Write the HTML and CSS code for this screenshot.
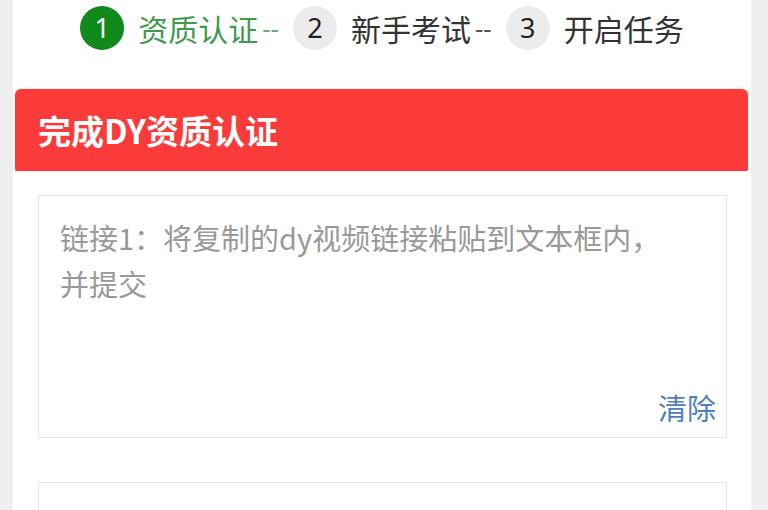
FILE: index.html
```html
<!DOCTYPE html>
<html lang="zh-CN">
<head>
<meta charset="utf-8">
<title>完成DY资质认证</title>
<link rel="stylesheet" href="styles.css">
</head>
<body>
<div class="panel">
  <div class="steps">
    <span class="step-num step-num-active">1</span>
    <span class="step-label step-label-active">资质认证</span>
    <span class="step-sep step-sep-active">--</span>
    <span class="step-num">2</span>
    <span class="step-label">新手考试</span>
    <span class="step-sep">--</span>
    <span class="step-num">3</span>
    <span class="step-label">开启任务</span>
  </div>
  <div class="card-head">完成DY资质认证</div>
  <div class="card-body">
    <div class="field">
      <div class="field-placeholder">链接1：将复制的dy视频链接粘贴到文本框内，<br>并提交</div>
      <div class="field-actions"><span class="field-clear">清除</span></div>
    </div>
    <div class="field field-second"></div>
  </div>
</div>
</body>
</html>
```

FILE: styles.css
```css
html, body {
  margin: 0;
  padding: 0;
}
body {
  background: #efefef;
  font-family: "Noto Sans CJK SC", "Noto Sans", sans-serif;
  height: 510px;
  overflow: hidden;
}
.panel {
  margin: 0 17px 0 13px;
  background: #ffffff;
  height: 510px;
  overflow: hidden;
}
.steps {
  height: 56px;
  display: flex;
  align-items: center;
  justify-content: center;
  margin-bottom: 33px;
}
.step-num {
  width: 44px;
  height: 44px;
  border-radius: 50%;
  background: #ececec;
  color: #222;
  font-family: "Noto Sans", sans-serif;
  font-size: 27px;
  line-height: 44px;
  text-align: center;
  flex: none;
  margin-right: 14px;
}
.step-num-active {
  background: #0f8a1a;
  color: #fff;
}
.step-label {
  font-size: 30px;
  line-height: 40px;
  color: #333;
  white-space: nowrap;
}
.step-label-active {
  color: #3f9a4f;
}
.step-sep {
  font-family: "Noto Sans", sans-serif;
  font-size: 26px;
  line-height: 40px;
  color: #555;
  margin: 0 14px 0 4px;
  white-space: nowrap;
  flex: none;
}
.step-sep-active {
  color: #6aa877;
}
.card-head {
  margin: 0 3px 0 2px;
  height: 82px;
  background: #fb3a3a;
  border-radius: 6px 6px 2px 2px;
  box-shadow: 0 0 2px rgba(251, 58, 58, 0.35);
  color: #fff;
  font-size: 33px;
  font-weight: 700;
  line-height: 82px;
  padding-left: 23px;
}
.card-body {
  padding: 24px 24px 0 25px;
}
.field {
  border: 1px solid #e6e6e6;
  display: flex;
  flex-direction: column;
  justify-content: space-between;
  padding: 18px 10px 12px 21px;
  box-sizing: border-box;
  height: 243px;
}
.field-placeholder {
  font-size: 29px;
  line-height: 46px;
  color: #999;
}
.field-actions {
  display: flex;
  justify-content: flex-end;
}
.field-clear {
  font-size: 29px;
  line-height: 36px;
  color: #4f7fc0;
}
.field-second {
  margin-top: 44px;
  height: 28px;
  border-bottom: none;
  padding: 0;
}
```
